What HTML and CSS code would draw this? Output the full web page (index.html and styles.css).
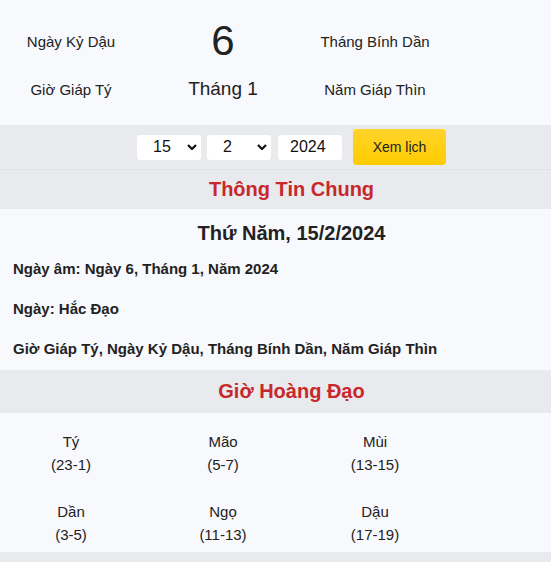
FILE: index.html
```html
<!DOCTYPE html>
<html lang="vi">
<head>
<meta charset="utf-8">
<title>Lịch âm</title>
<link rel="stylesheet" href="styles.css">
</head>
<body>
<div class="page">
  <section class="summary">
    <div class="cell">Ngày Kỷ Dậu</div>
    <div class="cell big">6</div>
    <div class="cell">Tháng Bính Dần</div>
    <div class="cell">Giờ Giáp Tý</div>
    <div class="cell mid">Tháng 1</div>
    <div class="cell">Năm Giáp Thìn</div>
  </section>

  <form class="picker">
    <div class="select"><span>15</span><svg viewBox="0 0 10 6" class="chev"><path d="M1 1 L5 5 L9 1" fill="none" stroke="#111" stroke-width="2.2"/></svg></div>
    <div class="select"><span>2</span><svg viewBox="0 0 10 6" class="chev"><path d="M1 1 L5 5 L9 1" fill="none" stroke="#111" stroke-width="2.2"/></svg></div>
    <div class="input">2024</div>
    <div class="btn">Xem lịch</div>
  </form>

  <h2 class="band">Thông Tin Chung</h2>
  <div class="info">
    <h3 class="date">Thứ Năm, 15/2/2024</h3>
    <p>Ngày âm: Ngày 6, Tháng 1, Năm 2024</p>
    <p>Ngày: Hắc Đạo</p>
    <p>Giờ Giáp Tý, Ngày Kỷ Dậu, Tháng Bính Dần, Năm Giáp Thìn</p>
  </div>

  <h2 class="band band2">Giờ Hoàng Đạo</h2>
  <section class="hours">
    <div class="hour">Tý<br>(23-1)</div>
    <div class="hour">Mão<br>(5-7)</div>
    <div class="hour">Mùi<br>(13-15)</div>
    <div class="hour">Dần<br>(3-5)</div>
    <div class="hour">Ngọ<br>(11-13)</div>
    <div class="hour">Dậu<br>(17-19)</div>
  </section>
  <div class="bottom"></div>
</div>
</body>
</html>
```

FILE: styles.css
```css
html, body {
  margin: 0;
  padding: 0;
  overflow: hidden;
}
body {
  background: #f8f9fc;
  font-family: "Liberation Sans", Arial, sans-serif;
  color: #222;
}
.page {
  width: 583px;
}
.summary {
  display: grid;
  grid-template-columns: 152px 152px 152px;
  grid-template-rows: 48px 48px;
  margin-left: -5px;
  padding-top: 17px;
  padding-bottom: 12px;
}
.cell {
  display: flex;
  align-items: center;
  justify-content: center;
  font-size: 15px;
  color: #222;
}
.big {
  font-size: 42px;
}
.mid {
  font-size: 19px;
}
.picker {
  display: flex;
  justify-content: center;
  align-items: center;
  gap: 6px;
  background: #e9eaee;
  height: 45px;
  margin: 0;
  border-bottom: 1px solid #dfe0e4;
  box-sizing: border-box;
}
.select, .input {
  width: 64px;
  height: 25px;
  background: #fff;
  border-radius: 3px;
  display: flex;
  align-items: center;
  font-size: 16px;
  color: #111;
  box-sizing: border-box;
}
.select span {
  flex: 1;
  padding-left: 16px;
}
.chev {
  width: 10px;
  height: 6px;
  margin-right: 4px;
}
.input {
  padding-left: 12px;
  margin-left: 1px;
}
.btn {
  margin-left: 5px;
  width: 93px;
  height: 36px;
  border-radius: 4px;
  background: linear-gradient(#ffd42a, #ffcc00);
  display: flex;
  align-items: center;
  justify-content: center;
  font-size: 14px;
  color: #222;
}
.band {
  margin: 0;
  background: #e9eaee;
  color: #c8282a;
  font-size: 20px;
  font-weight: bold;
  text-align: center;
  height: 39px;
  line-height: 39px;
}
.info {
  padding: 12px 13px 0;
}
.date {
  margin: 0 0 15px;
  text-align: center;
  font-size: 20px;
  line-height: 24px;
  font-weight: bold;
}
.info p {
  margin: 0 0 22px;
  font-size: 15px;
  line-height: 18px;
  font-weight: bold;
}
.info p:last-child {
  margin-bottom: 12px;
}
.band2 {
  height: 43px;
  line-height: 43px;
}
.hours {
  display: grid;
  grid-template-columns: 152px 152px 152px;
  row-gap: 24px;
  margin-left: -5px;
  padding: 17px 0 6px;
}
.hour {
  text-align: center;
  font-size: 15px;
  line-height: 23px;
  color: #222;
}
.bottom {
  background: #e9eaee;
  height: 40px;
}
```
